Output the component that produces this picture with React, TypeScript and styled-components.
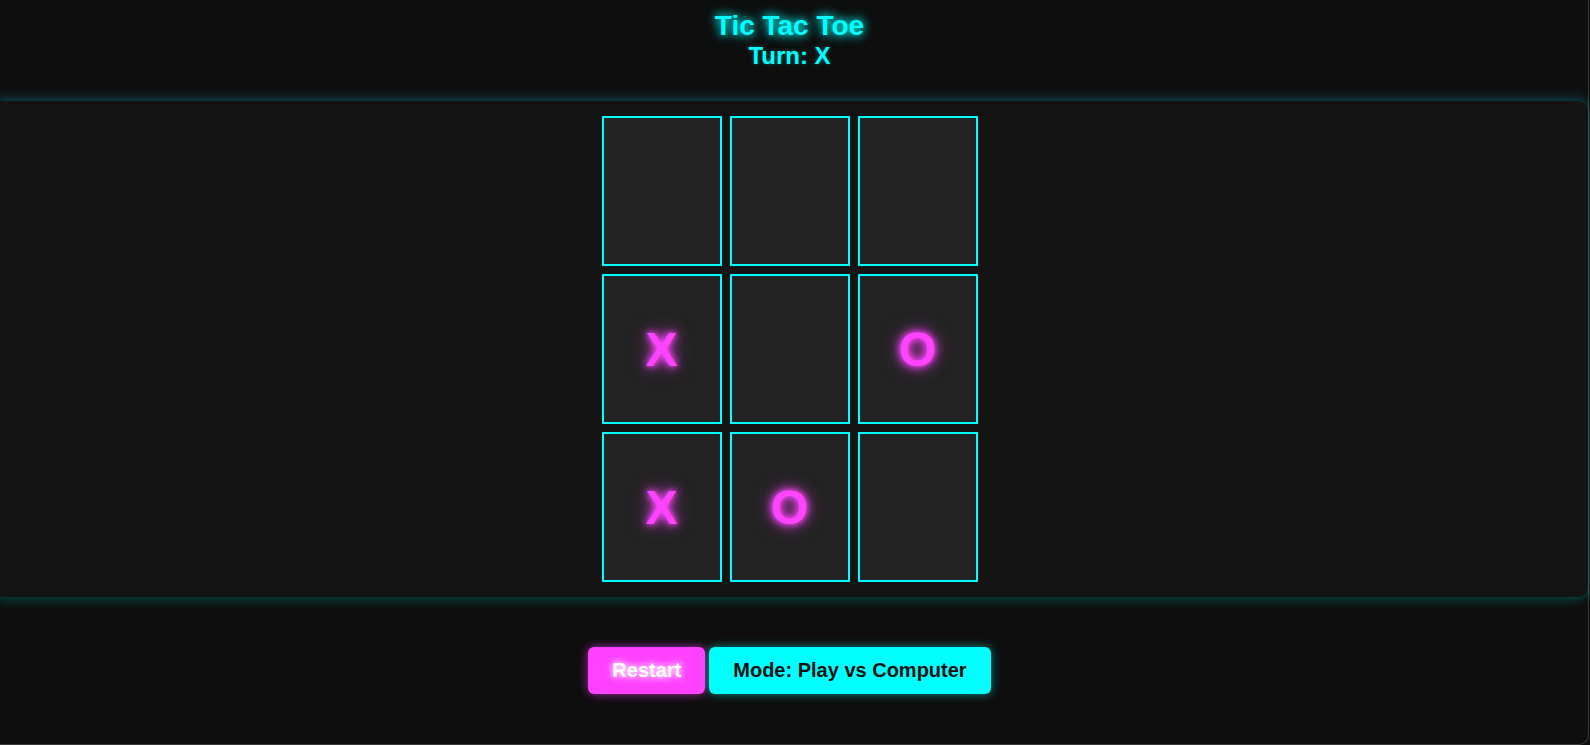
import React from "react";
import styled, { createGlobalStyle } from "styled-components";

const GlobalStyle = createGlobalStyle`
  html, body {
    margin: 0;
    padding: 0;
    background: #0e0e0e;
    overflow: hidden;
  }
  body {
    font-family: "Liberation Sans", Arial, sans-serif;
  }
`;

const Frame = styled.div`
  box-sizing: border-box;
  width: calc(100% + 8px);
  margin-left: -9px;
  height: 745px;
  border-right: 1px solid #3a3a3a;
  border-bottom: 1px solid #3a3a3a;
  border-bottom-right-radius: 10px;
  display: flex;
  flex-direction: column;
  align-items: center;
  padding-top: 10px;
`;

const Title = styled.h1`
  margin: 0;
  font-size: 28px;
  font-weight: 700;
  line-height: 32px;
  color: #00ffff;
  text-shadow: 0 0 8px #00ffff, 0 0 14px rgba(0, 255, 255, 0.6);
`;

const Turn = styled.div`
  font-size: 24px;
  font-weight: 700;
  line-height: 27px;
  color: #00ffff;
  text-shadow: 0 0 4px rgba(0, 255, 255, 0.35);
`;

const Panel = styled.div`
  align-self: stretch;
  margin-top: 32px;
  padding: 15px;
  background: #131313;
  border-radius: 10px;
  box-shadow: 0 0 14px rgba(0, 255, 255, 0.35);
  display: flex;
  justify-content: center;
`;

const Board = styled.div`
  display: grid;
  grid-template-columns: repeat(3, 120px);
  grid-template-rows: repeat(3, 150px);
  gap: 8px;
`;

const Cell = styled.div`
  box-sizing: border-box;
  background: #232323;
  border: 2px solid #00ffff;
  display: flex;
  align-items: center;
  justify-content: center;
  font-size: 48px;
  font-weight: 700;
  color: #ff44ff;
  text-shadow: 0 0 6px #ff44ff, 0 0 12px #ff44ff, 0 0 20px rgba(255, 68, 255, 0.5);
`;

const Controls = styled.div`
  margin-top: 50px;
  display: flex;
  gap: 4px;
`;

const Button = styled.button<{ $variant: "pink" | "cyan" }>`
  font-family: "Liberation Sans", Arial, sans-serif;
  font-size: 20px;
  font-weight: 700;
  line-height: 23px;
  padding: 12px 24px;
  border: none;
  border-radius: 6px;
  cursor: pointer;
  background: ${(p) => (p.$variant === "pink" ? "#ff40ff" : "#00ffff")};
  color: ${(p) => (p.$variant === "pink" ? "#ffffff" : "#111111")};
  text-shadow: ${(p) =>
    p.$variant === "pink" ? "0 0 6px #ffffff, 0 0 10px rgba(255,255,255,0.6)" : "none"};
  box-shadow: ${(p) =>
    p.$variant === "pink"
      ? "0 0 10px rgba(255, 64, 255, 0.6)"
      : "0 0 10px rgba(0, 255, 255, 0.5)"};
`;

const cells = ["", "", "", "X", "", "O", "X", "O", ""];

export default function App() {
  return (
    <>
      <GlobalStyle />
      <Frame>
        <Title>Tic Tac Toe</Title>
        <Turn>Turn: X</Turn>
        <Panel>
          <Board>
            {cells.map((c, i) => (
              <Cell key={i}>{c}</Cell>
            ))}
          </Board>
        </Panel>
        <Controls>
          <Button $variant="pink">Restart</Button>
          <Button $variant="cyan">Mode: Play vs Computer</Button>
        </Controls>
      </Frame>
    </>
  );
}
